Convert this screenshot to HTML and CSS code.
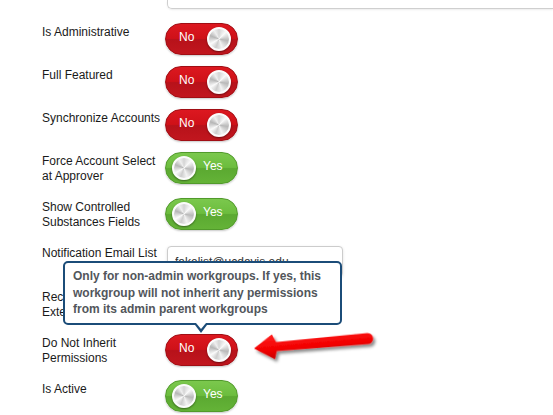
FILE: index.html
```html
<!DOCTYPE html>
<html>
<head>
<meta charset="utf-8">
<title>Workgroup settings</title>
<link rel="stylesheet" href="styles.css">
</head>
<body>
<div class="form">
  <div class="top-box"></div>

  <div class="row">
    <div class="label">Is Administrative</div>
    <div class="toggle off"><span class="toggle-text">No</span><span class="knob"></span></div>
  </div>
  <div class="row">
    <div class="label">Full Featured</div>
    <div class="toggle off"><span class="toggle-text">No</span><span class="knob"></span></div>
  </div>
  <div class="row">
    <div class="label">Synchronize Accounts</div>
    <div class="toggle off"><span class="toggle-text">No</span><span class="knob"></span></div>
  </div>
  <div class="row">
    <div class="label">Force Account Select at Approver</div>
    <div class="toggle on"><span class="knob"></span><span class="toggle-text">Yes</span></div>
  </div>
  <div class="row">
    <div class="label">Show Controlled Substances Fields</div>
    <div class="toggle on"><span class="knob"></span><span class="toggle-text">Yes</span></div>
  </div>
  <div class="row row-input">
    <div class="label">Notification Email List</div>
    <input class="text-input" type="text" value="fakelist@ucdavis.edu" readonly>
  </div>
  <div class="row">
    <div class="label">Receive Notifications<br>External Requests</div>
    <div class="toggle on"><span class="knob"></span><span class="toggle-text">Yes</span></div>
  </div>
  <div class="row">
    <div class="label">Do Not Inherit Permissions</div>
    <div class="toggle off"><span class="toggle-text">No</span><span class="knob"></span></div>
  </div>
  <div class="row">
    <div class="label">Is Active</div>
    <div class="toggle on"><span class="knob"></span><span class="toggle-text">Yes</span></div>
  </div>
</div>

<div class="tooltip">Only for non-admin workgroups. If yes, this workgroup will not inherit any permissions from its admin parent workgroups</div>

<svg class="arrow" width="150" height="50" viewBox="0 0 150 50" aria-hidden="true">
  <defs>
    <filter id="shadow" x="-20%" y="-50%" width="140%" height="200%">
      <feDropShadow dx="2" dy="3" stdDeviation="1.6" flood-color="#000" flood-opacity="0.45"/>
    </filter>
    <linearGradient id="red" x1="0" y1="0" x2="0" y2="1">
      <stop offset="0" stop-color="#ff2020"/>
      <stop offset="0.6" stop-color="#f20000"/>
      <stop offset="1" stop-color="#c80000"/>
    </linearGradient>
  </defs>
  <g transform="translate(14 28.5) rotate(-5)" filter="url(#shadow)">
    <path d="M0,0 L19,-12.5 L22.5,-4.5 L114,-5.5 A5.5,5.5 0 0 1 114,5.5 L22.5,4.5 L20,12.5 Z" fill="url(#red)"/>
  </g>
</svg>
</body>
</html>
```

FILE: styles.css
```css
html, body {
  margin: 0;
  padding: 0;
  overflow: hidden;
  background: #fff;
}

body {
  width: 553px;
  height: 415px;
  position: relative;
  font-family: "Liberation Sans", Arial, sans-serif;
  font-size: 12px;
  color: #1a1a1a;
}

.form {
  padding-left: 42px;
}

.top-box {
  margin-left: 125px;
  height: 8px;
  border: 1px solid #cfcfcf;
  border-top: none;
  border-right: none;
  border-radius: 0 0 0 5px;
  box-shadow: 0 1px 2px rgba(0, 0, 0, 0.08);
  margin-bottom: 14px;
}

.row {
  display: flex;
  align-items: flex-start;
  margin-bottom: 11px;
}

.label {
  width: 123px;
  flex: none;
  padding-top: 2px;
  padding-bottom: 3px;
  line-height: 15px;
}

.toggle {
  width: 73px;
  height: 32px;
  box-sizing: border-box;
  border-radius: 16px;
  border: 1px solid;
  display: flex;
  align-items: center;
  color: #fff;
  font-size: 12px;
  box-shadow: 0 1px 2px rgba(0, 0, 0, 0.22);
}

.toggle.off {
  background: linear-gradient(#dc1820 0%, #cf1118 48%, #b7121a 52%, #c1161e 100%);
  border-color: #a10e14;
  padding-left: 13px;
}

.toggle.on {
  background: linear-gradient(#7bc84d 0%, #6cbd3e 48%, #5ba931 52%, #64b337 100%);
  border-color: #519a2b;
}

.toggle-text {
  padding-bottom: 4px;
  line-height: 14px;
}

.toggle.on .toggle-text {
  margin-left: 7px;
}

.knob {
  width: 24px;
  height: 24px;
  box-sizing: border-box;
  border-radius: 50%;
  border: 2px solid #fbfbfb;
  background: conic-gradient(#d4d4d4, #f9f9f9 45deg, #b9b9b9 100deg, #f2f2f2 160deg, #cdcdcd 200deg, #fbfbfb 240deg, #b6b6b6 290deg, #efefef 330deg, #d4d4d4);
  box-shadow: 0 1px 2px rgba(0, 0, 0, 0.45);
}

.toggle.off .knob {
  margin-left: auto;
  margin-right: 6px;
}

.toggle.on .knob {
  margin-left: 6px;
}

.row-input .label {
  padding-bottom: 0;
}

.text-input {
  margin: 2px 0 0 2px;
  width: 176px;
  height: 31px;
  box-sizing: border-box;
  border: 1px solid #cccccc;
  border-radius: 4px;
  box-shadow: 0 1px 3px rgba(0, 0, 0, 0.12);
  padding: 0 7px;
  font-family: "Liberation Sans", Arial, sans-serif;
  font-size: 12px;
  color: #333;
  background: #fff;
  outline: none;
}

.tooltip {
  position: absolute;
  left: 63px;
  top: 261px;
  width: 279px;
  height: 64px;
  box-sizing: border-box;
  border: 2px solid #1b4c78;
  border-radius: 5px;
  background: #fff;
  padding: 5px 8px;
  font-weight: bold;
  font-size: 12px;
  line-height: 16.5px;
  color: #52565b;
}

.tooltip::before {
  content: "";
  position: absolute;
  left: 130px;
  top: calc(100% + 2px);
  border-top: 8px solid #1b4c78;
  border-left: 6px solid transparent;
  border-right: 6px solid transparent;
}

.tooltip::after {
  content: "";
  position: absolute;
  left: 131px;
  top: 100%;
  border-top: 6px solid #fff;
  border-left: 5px solid transparent;
  border-right: 5px solid transparent;
}

.arrow {
  position: absolute;
  left: 240px;
  top: 320px;
  overflow: visible;
}
```
